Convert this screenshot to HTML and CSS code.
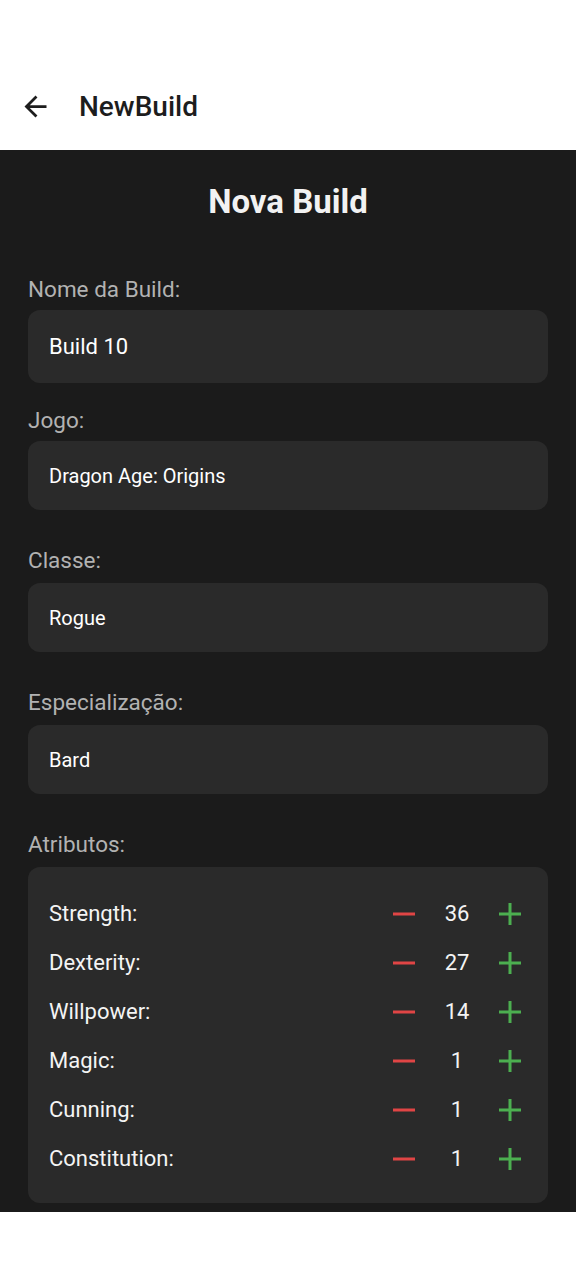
FILE: index.html
```html
<!DOCTYPE html>
<html lang="pt">
<head>
<meta charset="utf-8">
<title>NewBuild</title>
<link rel="stylesheet" href="styles.css">
</head>
<body>
<header class="appbar">
  <svg class="back" viewBox="0 0 24 24" aria-hidden="true"><path d="M20 11H7.83l5.59-5.59L12 4l-8 8 8 8 1.41-1.41L7.83 13H20v-2z"/></svg>
  <span class="appbar-title">NewBuild</span>
</header>
<main class="screen">
  <h1 class="title">Nova Build</h1>

  <div class="field field-first">
    <div class="label">Nome da Build:</div>
    <div class="box box-input">Build 10</div>
  </div>

  <div class="field field-second">
    <div class="label">Jogo:</div>
    <div class="box box-picker">Dragon Age: Origins</div>
  </div>

  <div class="field field-picker">
    <div class="label">Classe:</div>
    <div class="box box-picker">Rogue</div>
  </div>

  <div class="field field-picker">
    <div class="label">Especialização:</div>
    <div class="box box-picker">Bard</div>
  </div>

  <div class="field field-picker">
    <div class="label">Atributos:</div>
    <div class="attrs">
      <div class="attr"><span class="attr-name">Strength:</span><div class="ctrl"><svg class="minus" viewBox="0 0 22 22"><rect x="0" y="9.5" width="22" height="3"/></svg><span class="num">36</span><svg class="plus" viewBox="0 0 22 22"><rect x="0" y="9.5" width="22" height="3"/><rect x="9.5" y="0" width="3" height="22"/></svg></div></div>
      <div class="attr"><span class="attr-name">Dexterity:</span><div class="ctrl"><svg class="minus" viewBox="0 0 22 22"><rect x="0" y="9.5" width="22" height="3"/></svg><span class="num">27</span><svg class="plus" viewBox="0 0 22 22"><rect x="0" y="9.5" width="22" height="3"/><rect x="9.5" y="0" width="3" height="22"/></svg></div></div>
      <div class="attr"><span class="attr-name">Willpower:</span><div class="ctrl"><svg class="minus" viewBox="0 0 22 22"><rect x="0" y="9.5" width="22" height="3"/></svg><span class="num">14</span><svg class="plus" viewBox="0 0 22 22"><rect x="0" y="9.5" width="22" height="3"/><rect x="9.5" y="0" width="3" height="22"/></svg></div></div>
      <div class="attr"><span class="attr-name">Magic:</span><div class="ctrl"><svg class="minus" viewBox="0 0 22 22"><rect x="0" y="9.5" width="22" height="3"/></svg><span class="num">1</span><svg class="plus" viewBox="0 0 22 22"><rect x="0" y="9.5" width="22" height="3"/><rect x="9.5" y="0" width="3" height="22"/></svg></div></div>
      <div class="attr"><span class="attr-name">Cunning:</span><div class="ctrl"><svg class="minus" viewBox="0 0 22 22"><rect x="0" y="9.5" width="22" height="3"/></svg><span class="num">1</span><svg class="plus" viewBox="0 0 22 22"><rect x="0" y="9.5" width="22" height="3"/><rect x="9.5" y="0" width="3" height="22"/></svg></div></div>
      <div class="attr"><span class="attr-name">Constitution:</span><div class="ctrl"><svg class="minus" viewBox="0 0 22 22"><rect x="0" y="9.5" width="22" height="3"/></svg><span class="num">1</span><svg class="plus" viewBox="0 0 22 22"><rect x="0" y="9.5" width="22" height="3"/><rect x="9.5" y="0" width="3" height="22"/></svg></div></div>
    </div>
  </div>
</main>
</body>
</html>
```
FILE: styles.css
```css
* { box-sizing: border-box; }
html, body { margin: 0; padding: 0; background: #ffffff; }
body { font-family: Roboto, "Noto Sans", sans-serif; width: 576px; height: 1280px; }

.appbar {
  height: 150px;
  padding-top: 63px;
  display: flex;
  align-items: center;
  background: #ffffff;
}
.appbar .back {
  width: 33px;
  height: 33px;
  margin-left: 19px;
  fill: #1d1d1d;
  flex: none;
}
.appbar-title {
  margin-left: 27px;
  font-size: 28px;
  font-weight: 500;
  color: #1d1d1d;
  line-height: 32px;
}

.screen {
  background: #1b1b1b;
  height: 1062px;
  padding: 32px 28px 0;
}
.title {
  margin: 0;
  text-align: center;
  font-size: 33px;
  line-height: 40px;
  font-weight: 700;
  color: #f2f2f2;
}

.field { display: flex; flex-direction: column; }
.field-first { margin-top: 53px; }
.field-second { margin-top: 23px; }
.field-picker { margin-top: 36px; }

.label {
  font-size: 22.5px;
  line-height: 28px;
  color: #b2b2b2;
  margin-bottom: 7px;
}
.field-second .label { margin-bottom: 7px; }
.field-picker .label { margin-bottom: 9px; }

.box {
  background: #2a2a2a;
  border-radius: 12px;
  color: #ffffff;
  display: flex;
  align-items: center;
  padding: 0 21px;
}
.box-input { height: 73px; font-size: 22px; }
.box-picker { height: 69px; font-size: 20px; }

.attrs {
  background: #2a2a2a;
  border-radius: 12px;
  padding: 22px 27px 20px 21px;
}
.attr {
  height: 49px;
  display: flex;
  align-items: center;
  justify-content: space-between;
}
.attr-name {
  font-size: 22px;
  color: #f4f4f4;
}
.ctrl { display: flex; align-items: center; }
.minus, .plus { width: 22px; height: 22px; flex: none; }
.minus { fill: #e04545; }
.plus { fill: #4caf50; }
.num {
  width: 36px;
  margin: 0 24px 0 24px;
  text-align: center;
  font-size: 22px;
  color: #f4f4f4;
}
```
